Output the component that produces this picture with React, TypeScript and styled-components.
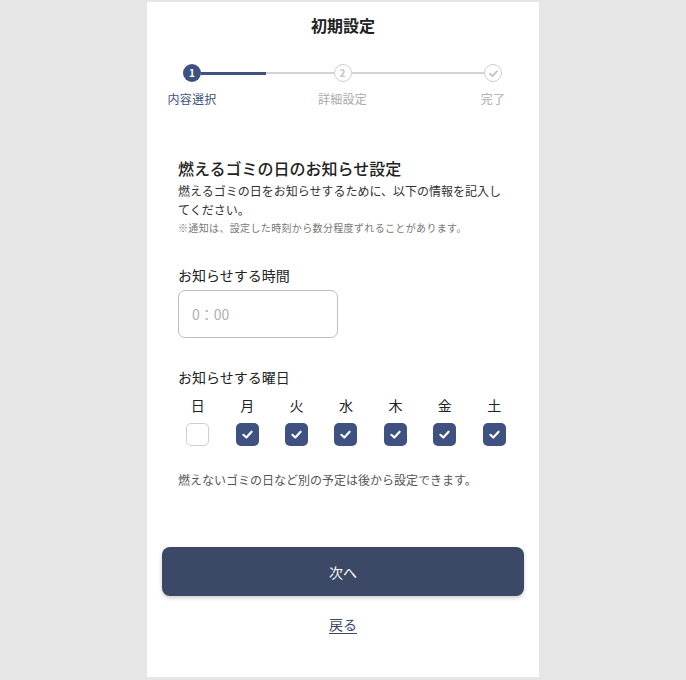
import React from "react";
import styled, { createGlobalStyle } from "styled-components";

const Global = createGlobalStyle`
  html, body { margin: 0; padding: 0; background: #e6e6e6; }
  body { font-family: "Noto Sans CJK JP", "Noto Sans", sans-serif; color: #222; }
  * { box-sizing: border-box; }
`;

const NAVY = "#3f5180";
const BTN = "#3b4966";

const Panel = styled.div`
  width: 392px;
  height: 675px;
  margin: 2px auto 0;
  background: #fff;
  display: flex;
  flex-direction: column;
`;

const Header = styled.h1`
  margin: 11px 0 0;
  font-size: 16px;
  line-height: 24px;
  font-weight: 700;
  text-align: center;
  color: #222;
`;

const Stepper = styled.div`
  display: flex;
  align-items: flex-start;
  margin: 27px 37px 0 36px;
`;

const Step = styled.div`
  width: 18px;
  display: flex;
  flex-direction: column;
  align-items: center;
`;

const Circle = styled.div<{ $state: "active" | "todo" }>`
  width: 18px;
  height: 18px;
  border-radius: 50%;
  display: flex;
  align-items: center;
  justify-content: center;
  font-size: 10px;
  line-height: 1;
  font-weight: 700;
  background: ${(p) => (p.$state === "active" ? NAVY : "#fff")};
  color: ${(p) => (p.$state === "active" ? "#fff" : "#c4c4c4")};
  border: ${(p) => (p.$state === "active" ? "none" : "1.5px solid #cfcfcf")};
`;

const StepLabel = styled.div<{ $active?: boolean }>`
  margin-top: 8px;
  white-space: nowrap;
  font-size: 12px;
  line-height: 18px;
  letter-spacing: 0.3px;
  color: ${(p) => (p.$active ? NAVY : "#aaa")};
`;

const Connector = styled.div`
  flex: 1;
  height: 2px;
  margin-top: 8px;
  background: #d4d4d4;
  position: relative;
`;

const Progress = styled.div`
  position: absolute;
  left: 0;
  top: -0.5px;
  height: 3px;
  width: 49%;
  background: ${NAVY};
`;

const Content = styled.div`
  padding: 0 31px;
  display: flex;
  flex-direction: column;
`;

const SectionTitle = styled.h2`
  margin: 48px 0 0;
  font-size: 16px;
  line-height: 24px;
  font-weight: 500;
  color: #222;
`;

const Desc = styled.p`
  margin: 1px 0 0;
  font-size: 12px;
  line-height: 19px;
  color: #333;
`;

const Note = styled.p`
  margin: 1px 0 0;
  font-size: 10px;
  line-height: 16px;
  letter-spacing: 0.35px;
  color: #777;
`;

const FieldLabel = styled.div<{ $top: number }>`
  margin-top: ${(p) => p.$top}px;
  font-size: 14px;
  line-height: 20px;
  color: #222;
`;

const TimeInput = styled.input`
  margin-top: 5px;
  width: 160px;
  height: 48px;
  border: 1px solid #bdbdbd;
  border-radius: 7px;
  padding: 0 13px;
  font-family: inherit;
  font-size: 14px;
  color: #222;
  outline: none;
  &::placeholder { color: #b0b0b0; }
`;

const Days = styled.div`
  margin: 8px -11px 0 -5px;
  display: grid;
  grid-template-columns: repeat(7, 1fr);
  row-gap: 8px;
  justify-items: center;
`;

const DayName = styled.div`
  font-size: 14px;
  line-height: 20px;
  color: #222;
`;

const Box = styled.div<{ $checked: boolean }>`
  width: 23px;
  height: 23px;
  border-radius: 5px;
  display: flex;
  align-items: center;
  justify-content: center;
  background: ${(p) => (p.$checked ? NAVY : "#fff")};
  border: ${(p) => (p.$checked ? "none" : "1.5px solid #cfcfcf")};
`;

const Hint = styled.p`
  margin: 25px 0 0;
  font-size: 12px;
  line-height: 18px;
  color: #555;
`;

const Actions = styled.div`
  padding: 0 15px;
  margin-top: 58px;
  display: flex;
  flex-direction: column;
  align-items: center;
`;

const Primary = styled.button`
  width: 100%;
  height: 49px;
  border: none;
  border-radius: 8px;
  background: ${BTN};
  color: #fff;
  font-family: inherit;
  font-size: 14px;
  box-shadow: 0 2px 4px rgba(0, 0, 0, 0.2);
`;

const Back = styled.a`
  margin-top: 18px;
  font-size: 14px;
  line-height: 20px;
  color: ${BTN};
  text-decoration: underline;
  text-underline-offset: 3px;
`;

const Check = ({ color = "#fff", size = 13 }: { color?: string; size?: number }) => (
  <svg width={size} height={size} viewBox="0 0 12 12" fill="none">
    <polyline points="2.2,6.3 4.9,8.8 9.8,3.4" stroke={color} strokeWidth="2" strokeLinecap="round" strokeLinejoin="round" />
  </svg>
);

const days = [
  { name: "日", checked: false },
  { name: "月", checked: true },
  { name: "火", checked: true },
  { name: "水", checked: true },
  { name: "木", checked: true },
  { name: "金", checked: true },
  { name: "土", checked: true },
];

export default function App() {
  return (
    <>
      <Global />
      <Panel>
        <Header>初期設定</Header>
        <Stepper>
          <Step>
            <Circle $state="active">1</Circle>
            <StepLabel $active>内容選択</StepLabel>
          </Step>
          <Connector>
            <Progress />
          </Connector>
          <Step>
            <Circle $state="todo">2</Circle>
            <StepLabel>詳細設定</StepLabel>
          </Step>
          <Connector />
          <Step>
            <Circle $state="todo">
              <Check color="#c4c4c4" size={11} />
            </Circle>
            <StepLabel>完了</StepLabel>
          </Step>
        </Stepper>
        <Content>
          <SectionTitle>燃えるゴミの日のお知らせ設定</SectionTitle>
          <Desc>燃えるゴミの日をお知らせするために、以下の情報を記入してください。</Desc>
          <Note>※通知は、設定した時刻から数分程度ずれることがあります。</Note>
          <FieldLabel $top={29}>お知らせする時間</FieldLabel>
          <TimeInput placeholder="0：00" />
          <FieldLabel $top={29}>お知らせする曜日</FieldLabel>
          <Days>
            {days.map((d) => (
              <DayName key={"n" + d.name}>{d.name}</DayName>
            ))}
            {days.map((d) => (
              <Box key={"b" + d.name} $checked={d.checked}>
                {d.checked && <Check />}
              </Box>
            ))}
          </Days>
          <Hint>燃えないゴミの日など別の予定は後から設定できます。</Hint>
        </Content>
        <Actions>
          <Primary>次へ</Primary>
          <Back href="#">戻る</Back>
        </Actions>
      </Panel>
    </>
  );
}
